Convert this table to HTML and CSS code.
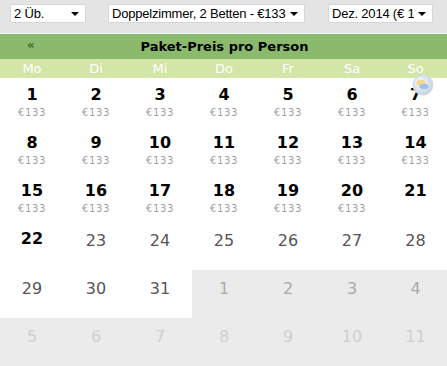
FILE: index.html
```html
<!DOCTYPE html>
<html lang="de">
<head>
<meta charset="utf-8">
<link rel="stylesheet" href="styles.css">
</head>
<body>
<div class="toolbar">
  <div class="sel sel-a"><span class="txt">2 Üb.</span><span class="arr"></span></div>
  <div class="sel sel-b"><span class="txt">Doppelzimmer, 2 Betten - €133</span><span class="arr"></span></div>
  <div class="sel sel-c"><span class="txt">Dez. 2014 (€ 133)</span><span class="arr"></span></div>
</div>
<div class="cal">
  <div class="head"><span class="prev">«</span><span class="title">Paket-Preis pro Person</span></div>
  <div class="days">
    <div>Mo</div><div>Di</div><div>Mi</div><div>Do</div><div>Fr</div><div>Sa</div><div>So</div>
  </div>
  <div class="grid">
    <div class="c"><b>1</b><i>€133</i></div>
    <div class="c"><b>2</b><i>€133</i></div>
    <div class="c"><b>3</b><i>€133</i></div>
    <div class="c"><b>4</b><i>€133</i></div>
    <div class="c"><b>5</b><i>€133</i></div>
    <div class="c"><b>6</b><i>€133</i></div>
    <div class="c"><b>7</b><i>€133</i>
      <svg class="bubble" width="22" height="22" viewBox="0 0 22 22">
        <defs>
          <radialGradient id="g" cx="0.4" cy="0.4" r="0.6">
            <stop offset="0" stop-color="#ffffff"/>
            <stop offset="1" stop-color="#c4d2e4"/>
          </radialGradient>
        </defs>
        <circle cx="11" cy="11" r="10" fill="url(#g)" stroke="#d3d9e2" stroke-width="1"/>
        <ellipse cx="9" cy="9" rx="4.5" ry="3.2" fill="#f4d88e"/>
        <ellipse cx="12" cy="12.5" rx="4.5" ry="2.8" fill="#9cc2ea"/>
      </svg>
    </div>
    <div class="c"><b>8</b><i>€133</i></div>
    <div class="c"><b>9</b><i>€133</i></div>
    <div class="c"><b>10</b><i>€133</i></div>
    <div class="c"><b>11</b><i>€133</i></div>
    <div class="c"><b>12</b><i>€133</i></div>
    <div class="c"><b>13</b><i>€133</i></div>
    <div class="c"><b>14</b><i>€133</i></div>
    <div class="c"><b>15</b><i>€133</i></div>
    <div class="c"><b>16</b><i>€133</i></div>
    <div class="c"><b>17</b><i>€133</i></div>
    <div class="c"><b>18</b><i>€133</i></div>
    <div class="c"><b>19</b><i>€133</i></div>
    <div class="c"><b>20</b><i>€133</i></div>
    <div class="c"><b>21</b></div>
    <div class="c"><b>22</b></div>
    <div class="c n">23</div>
    <div class="c n">24</div>
    <div class="c n">25</div>
    <div class="c n">26</div>
    <div class="c n">27</div>
    <div class="c n">28</div>
    <div class="c n">29</div>
    <div class="c n">30</div>
    <div class="c n">31</div>
    <div class="c o">1</div>
    <div class="c o">2</div>
    <div class="c o">3</div>
    <div class="c o">4</div>
    <div class="c f">5</div>
    <div class="c f">6</div>
    <div class="c f">7</div>
    <div class="c f">8</div>
    <div class="c f">9</div>
    <div class="c f">10</div>
    <div class="c f">11</div>
  </div>
</div>
</body>
</html>
```
FILE: styles.css
```css
html, body {
  margin: 0;
  padding: 0;
  background: #ececec;
  overflow: hidden;
}
body {
  width: 447px;
  height: 366px;
  font-family: "DejaVu Sans", Verdana, sans-serif;
}
.toolbar {
  height: 34px;
  background: #e4e4e4;
  border-bottom: 1px solid #f4f4f4;
  display: flex;
  align-items: flex-start;
  padding: 4px 0 0 10px;
  box-sizing: border-box;
}
.sel {
  height: 19px;
  background: #fff;
  border: 1px solid #d6d6d6;
  box-sizing: border-box;
  border-radius: 2px;
  display: flex;
  align-items: center;
  font-family: "Liberation Sans", Arial, sans-serif;
  font-size: 13px;
  color: #000;
  position: relative;
  overflow: hidden;
}
.sel .txt {
  white-space: nowrap;
  overflow: hidden;
  padding-left: 3px;
  flex: 1;
  letter-spacing: -0.2px;
}
.sel .arr {
  width: 0;
  height: 0;
  border-left: 4px solid transparent;
  border-right: 4px solid transparent;
  border-top: 4px solid #000;
  margin: 1px 6px 0 4px;
  flex: none;
}
.sel-a { width: 76px; }
.sel-b { width: 197px; margin-left: 22px; }
.sel-c { width: 105px; margin-left: 23px; }
.head {
  height: 25px;
  background: #8cba6d;
  position: relative;
  display: flex;
  align-items: center;
  justify-content: center;
}
.head .title {
  font-weight: bold;
  font-size: 13px;
  color: #000;
  padding-left: 2px;
}
.head .prev {
  position: absolute;
  left: 27px;
  top: 4px;
  font-size: 12px;
  font-weight: bold;
  color: #3f6a2d;
}
.days {
  display: grid;
  grid-template-columns: repeat(6, 64px) 63px;
  height: 19px;
  background: #d4e5a8;
}
.days div {
  text-align: center;
  color: #fff;
  font-size: 13px;
  line-height: 19px;
}
.grid {
  display: grid;
  grid-template-columns: repeat(6, 64px) 63px;
  grid-auto-rows: 48px;
}
.c {
  background: #fff;
  text-align: center;
  position: relative;
  padding-top: 7px;
  box-sizing: border-box;
}
.c b {
  display: block;
  font-size: 16px;
  line-height: 20px;
  font-weight: bold;
  color: #000;
}
.c i {
  display: block;
  font-style: normal;
  font-size: 10px;
  line-height: 12px;
  margin-top: 2px;
  color: #a0a0a0;
  letter-spacing: 0.6px;
}
.c.n, .c.o, .c.f {
  font-family: Verdana, "DejaVu Sans", sans-serif;
  font-size: 16px;
  line-height: 20px;
  padding-top: 9px;
  color: #555;
}
.c.o {
  background: #ebebeb;
  color: #aaa;
}
.c.f {
  background: #ebebeb;
  color: #cfcfcf;
}
.bubble {
  position: absolute;
  left: 28px;
  top: -4px;
}
```
